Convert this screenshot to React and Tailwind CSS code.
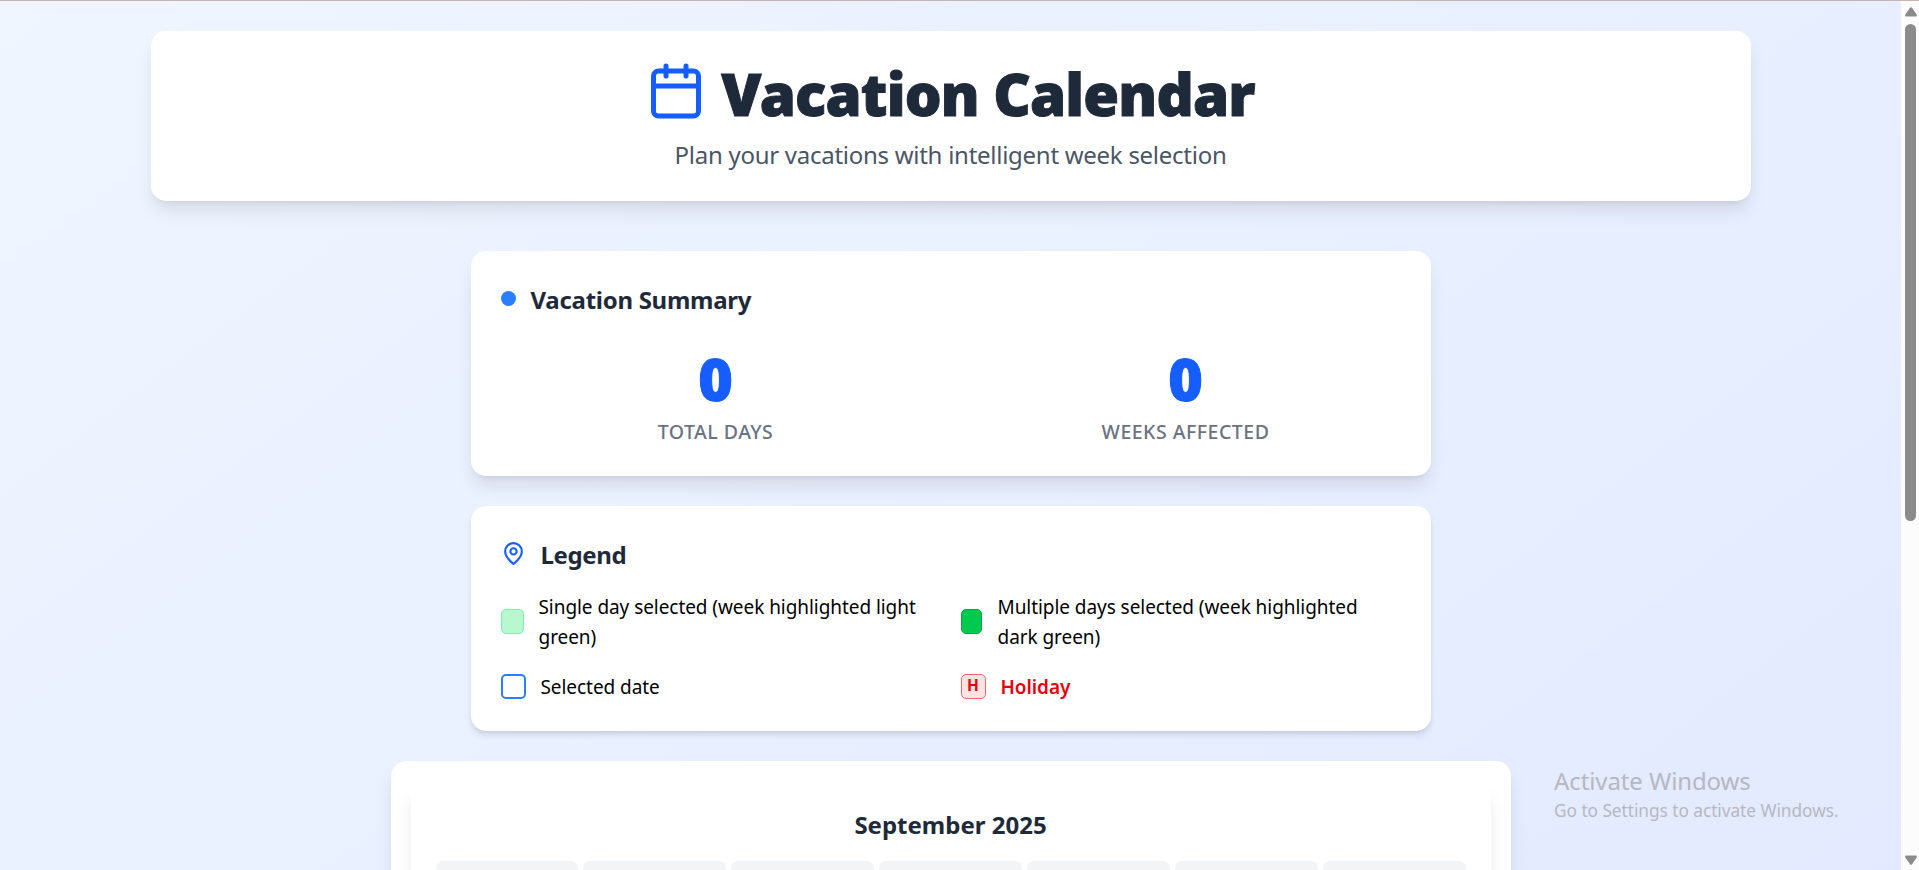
import { Calendar } from "lucide-react";

const WEEKDAYS = [0, 1, 2, 3, 4, 5, 6];

function PinIcon({ className }) {
  return (
    <svg
      className={className}
      viewBox="0 0 24 24"
      fill="none"
      stroke="currentColor"
      strokeWidth="2"
      strokeLinecap="round"
      strokeLinejoin="round"
    >
      <path d="M20 10c0 6-8 12-8 12s-8-6-8-12a8 8 0 0 1 16 0Z" />
      <circle cx="12" cy="10" r="3" />
    </svg>
  );
}

function Stat({ value, label }) {
  return (
    <div className="flex flex-col items-center">
      <div className="h-[60px] text-[59px] leading-[64px] font-black text-[#155dfc] [-webkit-text-stroke:1px_#155dfc]">
        {value}
      </div>
      <div className="mt-2.5 h-[30px] text-[19.5px] leading-[32px] font-medium tracking-[0.5px] text-[#6a7282]">{label}</div>
    </div>
  );
}

function Scrollbar() {
  return (
    <div className="flex h-full w-[18px] shrink-0 flex-col items-center bg-[#fcfcfc] pt-[6px] pl-px">
      <svg width="12" height="10" viewBox="0 0 12 10" fill="#8b8b8b">
        <path d="M5 0.8Q6 -0.4 7 0.8L11.7 7.4Q12.3 9.5 11 9.5H1Q-0.3 9.5 0.3 7.4Z" />
      </svg>
      <div className="mt-[7px] h-[497px] w-[11px] rounded-full bg-[#8b8b8b]" />
      <svg className="mt-auto mb-[5px]" width="12" height="10" viewBox="0 0 12 10" fill="#8b8b8b">
        <path d="M5 9.2Q6 10.4 7 9.2L11.7 2.6Q12.3 0.5 11 0.5H1Q-0.3 0.5 0.3 2.6Z" />
      </svg>
    </div>
  );
}

export default function App() {
  return (
    <div className="relative flex h-[870px] w-full flex-col overflow-hidden font-['Noto_Sans','Open_Sans',sans-serif]">
      <div className="h-px shrink-0 bg-[#c5b4b4]" />
      <div className="flex h-[869px]">
        <div className="h-full min-w-0 flex-1 overflow-hidden">
          <div className="flex h-[1450px] flex-col items-center bg-linear-to-br from-blue-50 to-indigo-100 pt-[30px]">
            <header className="flex h-[170px] w-[1600px] shrink-0 flex-col items-center rounded-[15px] bg-white pt-[30px] shadow-[0_12.5px_18.75px_-3.75px_rgba(0,0,0,0.1),0_5px_7.5px_-5px_rgba(0,0,0,0.1)]">
              <h1 className="flex h-[60px] items-center text-[58px] leading-[60px] font-black tracking-[-0.8px] text-[#1e2939]">
                <Calendar className="mr-[15px] size-[60px] text-[#155dfc]" />
                <span className="pt-1.5 whitespace-nowrap [-webkit-text-stroke:1px_#1e2939]">Vacation Calendar</span>
              </h1>
              <p className="mt-[15px] h-[35px] text-[24px] leading-[37px] tracking-[-0.27px] whitespace-nowrap text-[#4a5565]">
                Plan your vacations with intelligent week selection
              </p>
            </header>

            <section className="mt-[50px] h-[225px] w-[960px] shrink-0 rounded-[15px] bg-white p-[30px] shadow-[0_12.5px_18.75px_-3.75px_rgba(0,0,0,0.1),0_5px_7.5px_-5px_rgba(0,0,0,0.1)]">
              <h2 className="flex h-[35px] items-center text-[24px] leading-[35px] font-bold tracking-[-0.28px] text-[#1e2939]">
                <span className="mr-[15px] size-[15px] rounded-full bg-[#2b7fff]" />
                <span className="pt-0.5">Vacation Summary</span>
              </h2>
              <div className="mt-[30px] grid grid-cols-2 gap-10">
                <Stat value="0" label="TOTAL DAYS" />
                <Stat value="0" label="WEEKS AFFECTED" />
              </div>
            </section>

            <section className="mt-[30px] h-[225px] w-[960px] shrink-0 rounded-[15px] bg-white p-[30px] shadow-[0_5px_7.5px_-1.25px_rgba(0,0,0,0.1),0_2.5px_5px_-2.5px_rgba(0,0,0,0.1)]">
              <h2 className="flex h-[35px] items-center text-[24px] leading-[35px] font-bold tracking-[-0.35px] text-[#1e2939]">
                <PinIcon className="mr-[15px] size-[25px] text-[#155dfc]" />
                <span className="pt-0.5">Legend</span>
              </h2>
              <div className="mt-5 grid grid-cols-2 gap-5 text-[19px] leading-[30px] tracking-[-0.06px] text-black">
                <div className="flex h-[60px] items-center">
                  <span className="mr-[15px] h-[25px] w-[23px] shrink-0 rounded-[5px] border border-[#7bf1a8] bg-[#b9f8cf]" />
                  <span className="pt-0.5 whitespace-nowrap">
                    Single day selected (week highlighted light
                    <br />
                    green)
                  </span>
                </div>
                <div className="flex h-[60px] items-center">
                  <span className="mr-[15px] h-[25px] w-[21px] shrink-0 rounded-[5px] border border-[#00a63e] bg-[#00c950]" />
                  <span className="pt-0.5 pl-px whitespace-nowrap">
                    Multiple days selected (week highlighted
                    <br />
                    dark green)
                  </span>
                </div>
                <div className="flex h-[30px] items-center">
                  <span className="mr-[15px] size-[25px] shrink-0 rounded-[5px] border-2 border-[#2b7fff] bg-white" />
                  <span className="pt-0.5">Selected date</span>
                </div>
                <div className="flex h-[30px] items-center">
                  <span className="mr-[15px] flex size-[25px] shrink-0 items-center justify-center rounded-[5px] border border-[#ff6467] bg-[#ffe2e2] text-[15.5px] leading-none font-bold text-[#e7000b]">
                    H
                  </span>
                  <span className="pt-0.5 font-semibold text-[#e7000b]">Holiday</span>
                </div>
              </div>
            </section>

            <section className="mt-[30px] h-[640px] w-[1120px] shrink-0 rounded-[15px] bg-white p-5 shadow-[0_12.5px_18.75px_-3.75px_rgba(0,0,0,0.1),0_5px_7.5px_-5px_rgba(0,0,0,0.1)]">
              <div className="h-[600px] rounded-[15px] bg-white p-[25px] shadow-[0_12.5px_18.75px_-3.75px_rgba(0,0,0,0.1),0_5px_7.5px_-5px_rgba(0,0,0,0.1)]">
                <h3 className="mt-px h-[34px] text-center text-[24px] leading-[35px] font-bold text-[#1e2939]">
                  September 2025
                </h3>
                <div className="mt-5 grid grid-cols-7 gap-[5px]">
                  {WEEKDAYS.map((day) => (
                    <div key={day} className="h-[45px] rounded-[7px] bg-[#f3f4f6]" />
                  ))}
                </div>
              </div>
            </section>
          </div>
        </div>
        <Scrollbar />
      </div>

      {/* System watermark floating over the page */}
      <div className="absolute top-[764px] left-[1554px] whitespace-nowrap text-[#b5b8c2]">
        <div className="text-[24px] leading-[34px] tracking-[-0.1px]">Activate Windows</div>
        <div className="text-[17.3px] leading-[25px] tracking-[-0.05px]">Go to Settings to activate Windows.</div>
      </div>
    </div>
  );
}
